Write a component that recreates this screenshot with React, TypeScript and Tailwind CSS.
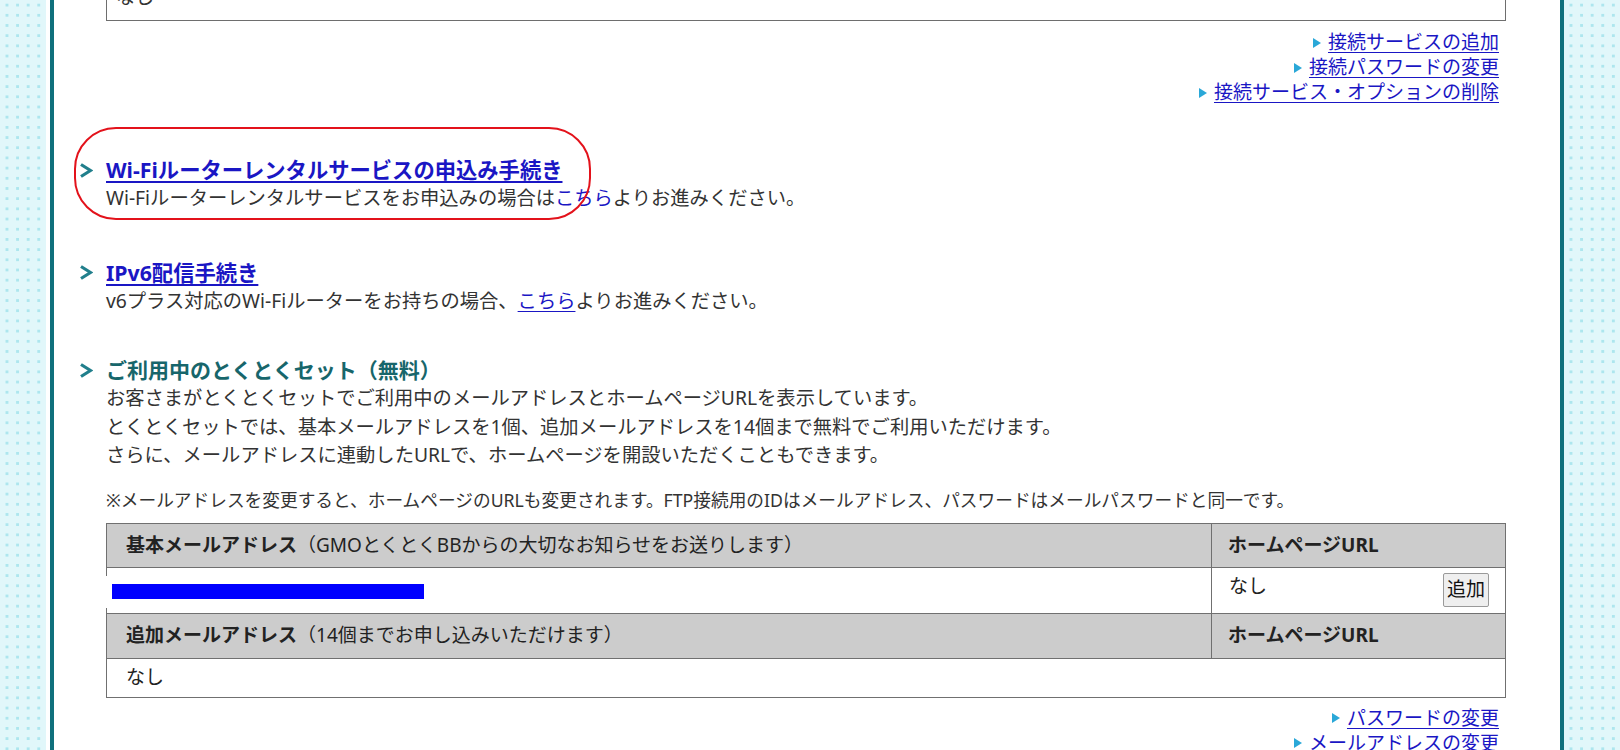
import React from "react";

const Tri = () => (
  <svg width="8" height="10" viewBox="0 0 8 10" className="mr-[7px] shrink-0">
    <polygon points="0,0 8,5 0,10" fill="#2aa8d8" />
  </svg>
);

const Chevron = () => (
  <svg width="14" height="15" viewBox="0 0 14 15" className="shrink-0">
    <polyline points="2,1.5 11.5,7.5 2,13.5" fill="none" stroke="#217f8c" strokeWidth="3.2" />
  </svg>
);

const RightLink = ({ children }: { children: React.ReactNode }) => (
  <a className="flex items-center text-[#1a16c4] cursor-pointer">
    <Tri />
    <span className="underline underline-offset-[3px]">{children}</span>
  </a>
);

const pattern =
  "bg-[#e1f7fa] bg-[radial-gradient(circle,#ade6ee_1.5px,transparent_1.7px)] bg-[length:10.6px_10.2px] bg-[position:1.7px_0px]";

export default function App() {
  return (
    <div className="flex w-[1620px] h-[750px] overflow-hidden font-['Noto_Sans','Noto_Sans_CJK_JP',sans-serif] text-[19px] text-[#333]">
      <div className={`w-[46px] shrink-0 ${pattern}`} />
      <div className="w-[4px] shrink-0 bg-white" />
      <div className="w-[4px] shrink-0 bg-[#10707c]" />
      <main className="w-[1506px] shrink-0 bg-white pl-[52px] pr-[54px]">
        {/* top box */}
        <div className="h-[21px] border-x border-b border-[#6e6e6e] overflow-hidden">
          <div className="-mt-[17px] pl-[9px] leading-[29px]">なし</div>
        </div>

        <div className="mt-[9px] flex flex-col items-end pr-[7px] leading-[25px]">
          <RightLink>接続サービスの追加</RightLink>
          <RightLink>接続パスワードの変更</RightLink>
          <RightLink>接続サービス・オプションの削除</RightLink>
        </div>

        {/* section 1 */}
        <section className="relative mt-[51px]">
          <div className="pointer-events-none absolute -left-[32px] -top-[29px] w-[517px] h-[93px] rounded-[42px] border-[2.5px] border-[#e3121b]" />
          <div className="flex items-center -ml-[27px] gap-[13px] leading-[28px]">
            <Chevron />
            <a className="text-[21.3px] font-bold text-[#1a16c4] underline underline-offset-[3px] cursor-pointer">
              Wi-Fiルーターレンタルサービスの申込み手続き
            </a>
          </div>
          <p className="leading-[28.5px] text-[19.3px]">
            Wi-Fiルーターレンタルサービスをお申込みの場合は<a className="text-[#1a16c4]">こちら</a>よりお進みください。
          </p>
        </section>

        {/* section 2 */}
        <section className="mt-[46px]">
          <div className="flex items-center -ml-[27px] gap-[13px] leading-[28px]">
            <Chevron />
            <a className="text-[21.3px] font-bold text-[#1a16c4] underline underline-offset-[3px] cursor-pointer">
              IPv6配信手続き
            </a>
          </div>
          <p className="leading-[28.5px] text-[19.3px]">
            v6プラス対応のWi-Fiルーターをお持ちの場合、<a className="text-[#1a16c4] underline underline-offset-[3px]">こちら</a>よりお進みください。
          </p>
        </section>

        {/* section 3 */}
        <section className="mt-[41px]">
          <div className="flex items-center -ml-[27px] gap-[13px] leading-[28px]">
            <Chevron />
            <h2 className="text-[21px] font-bold text-[#17666b]">ご利用中のとくとくセット（無料）</h2>
          </div>
          <div className="leading-[28.5px] text-[19.3px]">
            <p>お客さまがとくとくセットでご利用中のメールアドレスとホームページURLを表示しています。</p>
            <p>とくとくセットでは、基本メールアドレスを1個、追加メールアドレスを14個まで無料でご利用いただけます。</p>
            <p>さらに、メールアドレスに連動したURLで、ホームページを開設いただくこともできます。</p>
          </div>
          <p className="mt-[16px] text-[17.7px] leading-[28px]">
            ※メールアドレスを変更すると、ホームページのURLも変更されます。FTP接続用のIDはメールアドレス、パスワードはメールパスワードと同一です。
          </p>

          {/* table */}
          <div className="mt-[9px] border-t border-r border-b border-[#707070] text-[#222]">
            <div className="flex h-[44px] bg-[#cccccc] border-b border-[#707070]">
              <div className="flex-1 flex items-center border-l border-[#707070] pl-[19px]">
                <span className="font-bold">基本メールアドレス</span>
                <span>（GMOとくとくBBからの大切なお知らせをお送りします）</span>
              </div>
              <div className="w-[294px] flex items-center border-l border-[#707070] pl-[16px] font-bold">
                ホームページURL
              </div>
            </div>
            <div className="flex h-[46px] border-b border-[#707070]">
              <div className="flex-1 flex">
                <div className="w-px flex flex-col justify-between">
                  <div className="h-[8px] bg-[#707070]" />
                  <div className="h-[5px] bg-[#707070]" />
                </div>
                <div className="pl-[5px] pt-[16px]">
                  <div className="w-[312px] h-[15px] bg-[#0000ff]" />
                </div>
              </div>
              <div className="w-[294px] flex justify-between border-l border-[#707070] pl-[17px] pr-[16px]">
                <span className="pt-[4px] leading-[29px]">なし</span>
                <button className="mt-[5px] h-[34px] w-[46px] bg-[#efefef] border border-[#9a9a9a] rounded-[2px] text-[19px] leading-none text-[#111]">
                  追加
                </button>
              </div>
            </div>
            <div className="flex h-[45px] bg-[#cccccc] border-b border-[#707070]">
              <div className="flex-1 flex items-center border-l border-[#707070] pl-[19px]">
                <span className="font-bold">追加メールアドレス</span>
                <span>（14個までお申し込みいただけます）</span>
              </div>
              <div className="w-[294px] flex items-center border-l border-[#707070] pl-[16px] font-bold">
                ホームページURL
              </div>
            </div>
            <div className="h-[38px] border-l border-[#707070] pl-[19px] pt-[4px] leading-[29px]">なし</div>
          </div>

          <div className="mt-[8px] flex flex-col items-end pr-[7px] leading-[25px]">
            <RightLink>パスワードの変更</RightLink>
            <RightLink>メールアドレスの変更</RightLink>
          </div>
        </section>
      </main>
      <div className="w-[4px] shrink-0 bg-[#10707c]" />
      <div className={`flex-1 ${pattern}`} />
    </div>
  );
}
